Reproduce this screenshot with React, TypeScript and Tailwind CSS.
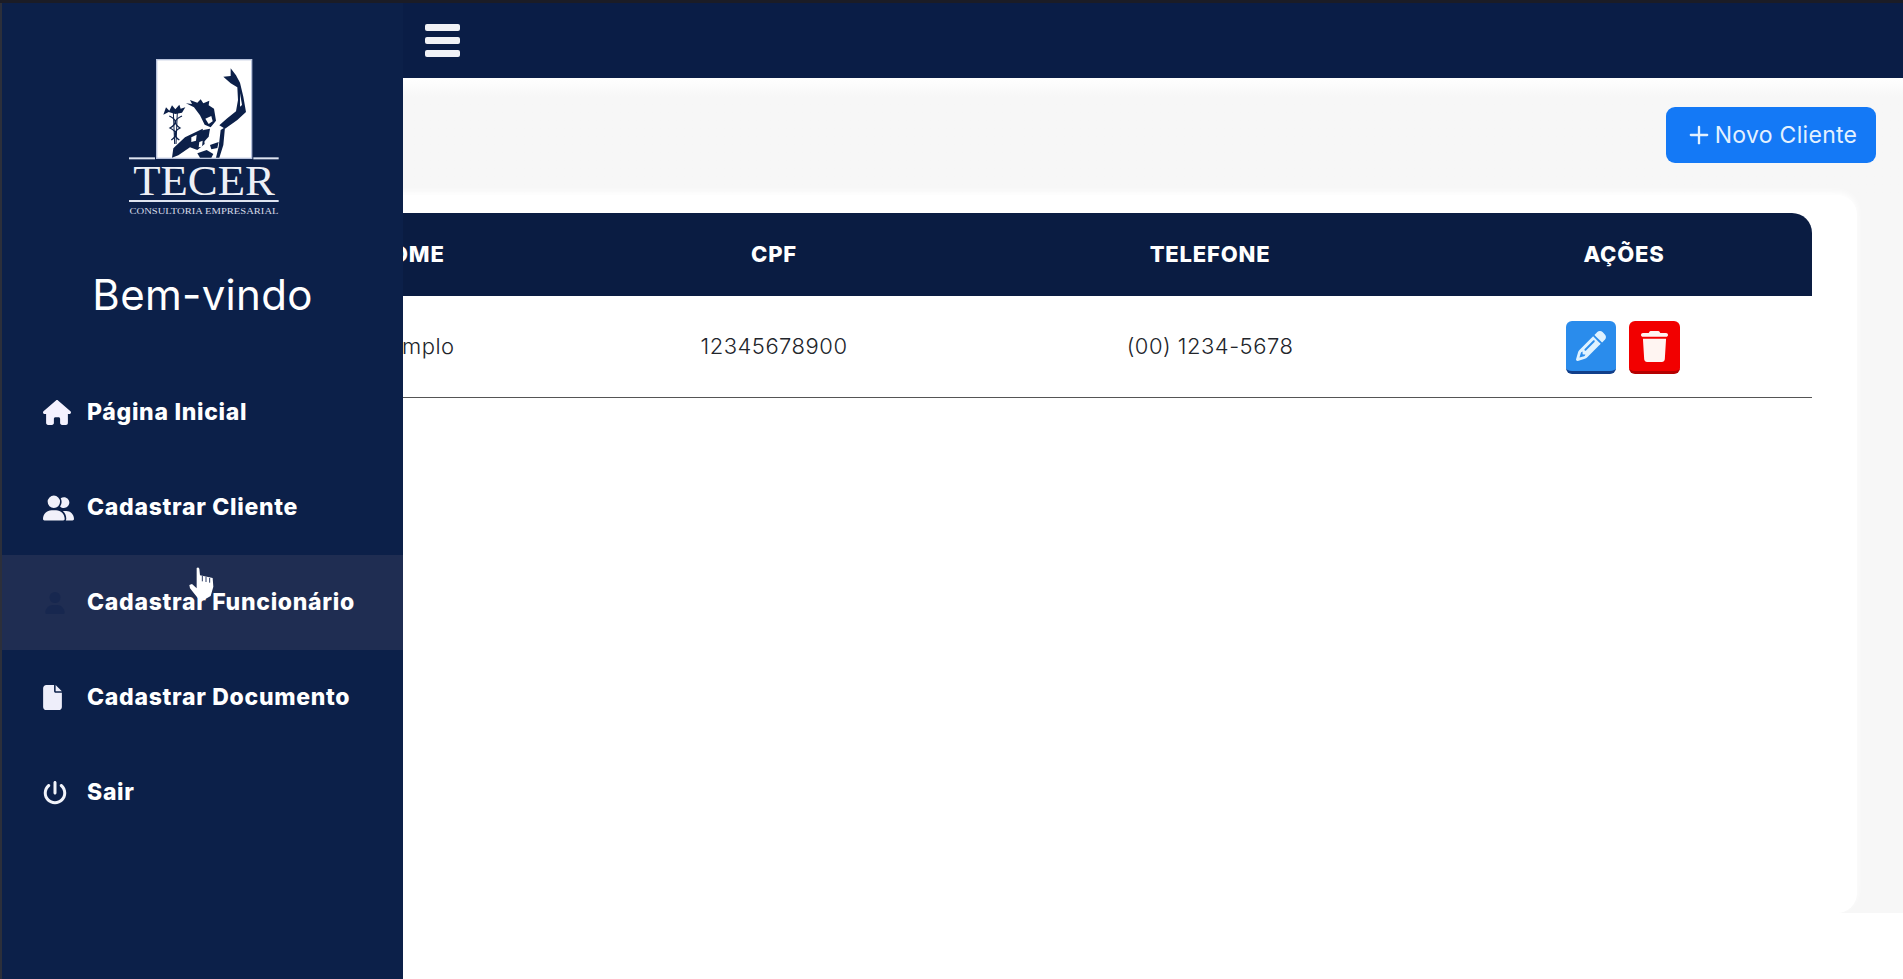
import { FaFile, FaHouse, FaPencil, FaPowerOff, FaTrash, FaUser, FaUserGroup } from "react-icons/fa6";
import { Plus } from "lucide-react";

const NAV = [
  { label: "Página Inicial", icon: <FaHouse className="w-[28px] h-[25px] text-[#f4f2ff]" /> },
  { label: "Cadastrar Cliente", icon: <FaUserGroup className="w-[31px] h-[26px] text-[#f1f1fa]" /> },
  { label: "Cadastrar Funcionário", icon: <FaUser className="w-[20px] h-[22px] ml-[2px] text-[#17274f]" />, active: true },
  { label: "Cadastrar Documento", icon: <FaFile className="w-[19px] h-[25px] text-[#eeeefa]" /> },
  { label: "Sair", icon: <FaPowerOff className="w-[24px] h-[24px] text-[#f1f3fa]" /> },
];

const COLS = "grid grid-cols-[310px_420px_452px_376px] items-center text-center";

const TecerLogo = () => (
  <svg viewBox="0 0 570 525" className="w-[190px] h-[175px] shrink-0">
    <rect x="140" y="29" width="285" height="296" fill="#ffffff" stroke="#b9c3dc" strokeWidth="4" />
    {/* raised arm */}
    <path d="M340 80 L362 78 L362 55 L378 76 L390 98 L400 140 L408 186 L382 210 L345 236 L328 226 L350 206 L378 184 L384 150 L382 112 L362 100 Z" fill="#0c2049" />
    <path d="M390 130 L396 165 L390 170 Z" fill="#ffffff" />
    {/* chest and lower body */}
    <path d="M345 232 L340 285 L328 323 L318 323 L326 290 L332 240 Z" fill="#0c2049" />
    <path d="M300 285 L326 276 L322 294 L304 298 Z" fill="#0c2049" />
    <path d="M290 300 L310 312 L304 323 L270 323 L262 310 Z" fill="#0c2049" />
    <path d="M280 240 L300 236 L296 260 L276 282 L268 262 Z" fill="#0c2049" />
    {/* arm with the staff */}
    <path d="M278 236 L284 282 L262 300 L240 292 L205 316 L186 323 L190 295 L225 262 Z" fill="#0c2049" />
    <path d="M244 262 L260 254 L258 272 L244 276 Z" fill="#ffffff" />
    <path d="M268 276 L278 272 L276 290 L266 292 Z" fill="#ffffff" />
    {/* head and wings */}
    <path d="M228 160 L246 162 L240 150 L262 158 L272 148 L280 160 L298 152 L296 166 L312 176 L318 212 L302 232 L284 224 L270 196 L252 172 Z" fill="#0c2049" />
    <path d="M286 206 L304 198 L308 214 L296 222 Z" fill="#ffffff" />
    {/* caduceus */}
    <path d="M190 186 L194 282 M202 186 L198 282" stroke="#0c2049" strokeWidth="3" fill="none" />
    <path d="M178 198 Q212 214 180 234 Q212 250 184 270 M216 198 Q180 214 210 234 Q180 250 208 270" stroke="#0c2049" strokeWidth="4" fill="none" />
    <path d="M160 194 L168 172 L178 182 L186 166 L196 178 L208 164 L212 176 L226 172 L216 188 L196 192 L176 186 Z" fill="#0c2049" />
    {/* name plate */}
    <rect x="57" y="322" width="78" height="6" fill="#dfe4f0" />
    <rect x="430" y="322" width="76" height="6" fill="#dfe4f0" />
    <text x="282" y="436" textAnchor="middle" textLength="425" lengthAdjust="spacingAndGlyphs" fill="#eef0f6" fontSize="126" fontFamily="'Liberation Serif', serif">TECER</text>
    <rect x="57" y="450" width="449" height="6" fill="#dfe4f0" />
    <text x="282" y="491" textAnchor="middle" textLength="447" lengthAdjust="spacingAndGlyphs" fill="#d7dbe8" fontSize="27" fontFamily="'Liberation Serif', serif">CONSULTORIA EMPRESARIAL</text>
  </svg>
);

const HandCursor = () => (
  <svg viewBox="0 0 210 180" className="absolute left-[170px] top-[550px] w-[70px] h-[60px]">
    <path d="M80 54 Q85 50 88 56 L90 76 L128 84 L130 110 L122 138 L105 148 L85 146 L60 115 L58 105 L66 102 L80 115 Z" fill="#ffffff" />
    <path d="M97 78 L97 94 M108 80 L108 96 M119 84 L119 98" stroke="#2a3a62" strokeWidth="3" />
  </svg>
);

const Sidebar = () => (
  <aside className="absolute left-0 top-[3px] bottom-0 w-[403px] bg-[#0c2049] border-l-2 border-[#2c2f3a] flex flex-col">
    <div className="flex flex-col items-center pt-[47px] pl-[5px]">
      <TecerLogo />
      <h2 className="mt-[46px] mr-[5px] text-[42px] leading-[48px] font-normal tracking-[0.3px] text-white">Bem-vindo</h2>
    </div>
    <nav className="mt-[46px] flex flex-col">
      {NAV.map((item) => (
        <a
          key={item.label}
          className={`h-[95px] flex items-center pl-[41px] text-[23px] font-extrabold text-white tracking-[0.7px] ${
            item.active ? "bg-[#1f2d52]" : ""
          }`}
        >
          <span className="w-[44px] shrink-0 flex items-center">{item.icon}</span>
          {item.label}
        </a>
      ))}
    </nav>
  </aside>
);

export default function App() {
  return (
    <div className="relative h-[979px] w-full overflow-hidden bg-white font-['Inter',sans-serif]">
      <div className="h-[3px] bg-[#1b1c26]" />
      <header className="h-[75px] bg-[#0a1d46] flex items-center pl-[425px]">
        <div className="flex flex-col gap-[6px] w-[35px]">
          <span className="h-[7px] rounded-[2px] bg-[#f1f2f6]" />
          <span className="h-[7px] rounded-[2px] bg-[#f1f2f6]" />
          <span className="h-[7px] rounded-[2px] bg-[#f1f2f6]" />
        </div>
      </header>

      <main className="ml-[201px] h-[835px] flex flex-col bg-[#f7f7f7]">
        <div className="h-[117px] shrink-0 flex justify-end pt-[29px] pr-[27px] bg-gradient-to-b from-white to-[#f7f7f7] to-[16%]">
          <button className="h-[56px] w-[210px] rounded-[9px] bg-[#1479f6] text-[#e3f1ff] text-[23px] tracking-[0.3px] flex items-center justify-center gap-[2px]">
            <Plus className="w-[28px] h-[28px]" strokeWidth={2} />
            Novo Cliente
          </button>
        </div>

        <section className="flex-1 mr-[46px] bg-white rounded-[20px] shadow-[0_-3px_6px_#ffffff] pt-[18px] pl-[53px]">
          <div className={`${COLS} h-[83px] w-[1558px] bg-[#0a1c42] rounded-t-[20px] text-white font-extrabold text-[22px] tracking-[0.8px]`}>
            <span>NOME</span>
            <span>CPF</span>
            <span>TELEFONE</span>
            <span>AÇÕES</span>
          </div>
          <div className={`${COLS} h-[102px] w-[1558px] border-b border-[#555555] text-[#22252b] text-[22px] font-light tracking-[0.5px]`}>
            <span>Exemplo</span>
            <span>12345678900</span>
            <span>(00) 1234-5678</span>
            <div className="flex justify-center gap-[13px] pt-[2px] pr-[3px]">
              <button className="w-[50px] h-[53px] rounded-[6px] bg-[#2a8cec] border-b-[3px] border-[#123f8a] flex items-center justify-center">
                <FaPencil className="w-[30px] h-[30px] text-[#dff2ff]" />
              </button>
              <button className="w-[51px] h-[53px] rounded-[6px] bg-[#f20000] border-b-[3px] border-[#b50000] flex items-center justify-center">
                <FaTrash className="w-[27px] h-[31px] text-[#fff5f2]" />
              </button>
            </div>
          </div>
        </section>
      </main>

      <Sidebar />
      <HandCursor />
    </div>
  );
}
